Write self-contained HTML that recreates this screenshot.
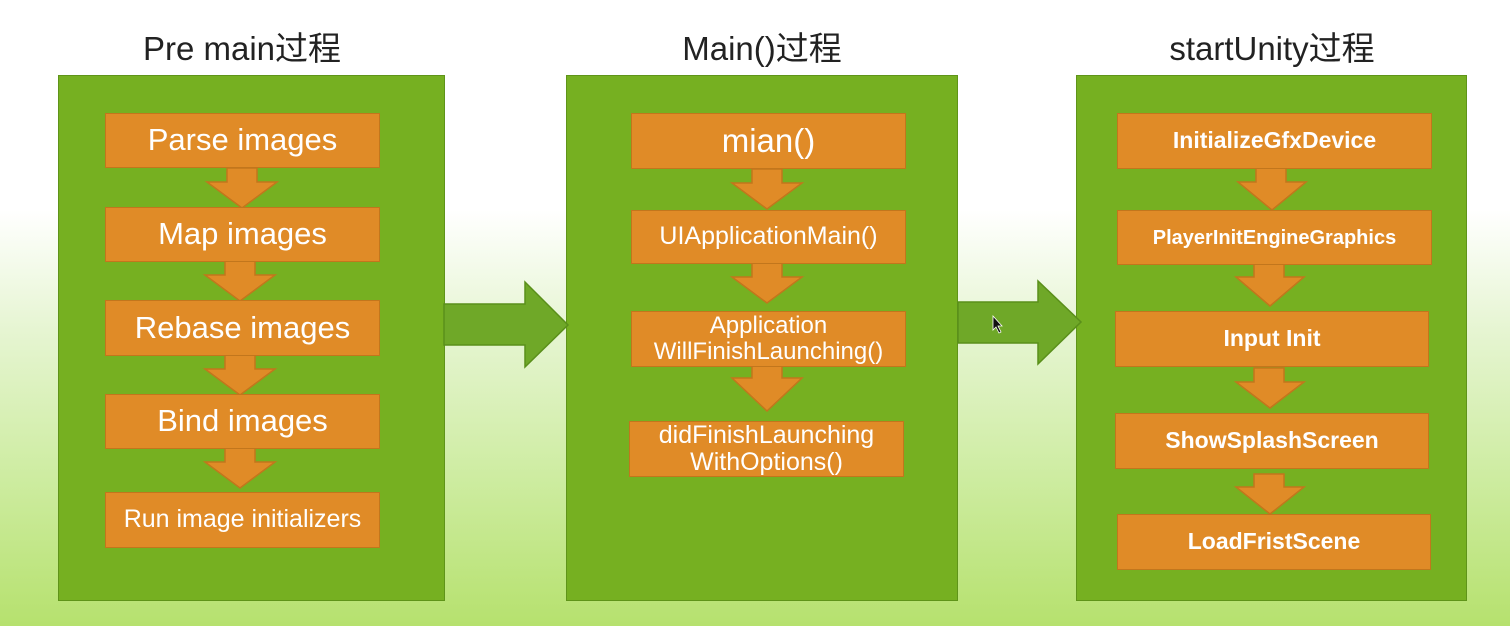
<!DOCTYPE html>
<html><head><meta charset="utf-8"><style>
body{margin:0;width:1510px;height:626px;overflow:hidden;position:relative;font-family:"Liberation Sans","Noto Sans CJK SC",sans-serif;
background:linear-gradient(180deg,#fff 0px,#fff 210px,#e6f5d2 330px,#cdeca0 480px,#b6e16e 626px);}
.t{position:absolute;top:22px;font-size:33px;color:#222;text-align:center;width:400px}
.p{position:absolute;top:75px;height:526px;background:#76b021;border:1px solid #5f9419;box-sizing:border-box}
.b{position:absolute;background:#e08b27;border:1.5px solid #c2761c;box-sizing:border-box;color:#fff;display:flex;align-items:center;justify-content:center;text-align:center;line-height:1.1}
.k{font-weight:bold;font-size:23px}
svg{position:absolute;left:0;top:0}
</style></head><body>
<div class="t" style="left:42px">Pre main过程</div>
<div class="t" style="left:562px">Main()过程</div>
<div class="t" style="left:1072px">startUnity过程</div>
<div class="p" style="left:58px;width:387px"></div>
<div class="p" style="left:566px;width:392px"></div>
<div class="p" style="left:1076px;width:391px"></div>
<svg width="1510" height="626">
<g fill="#e08b27" stroke="#c2761c" stroke-width="1.5">
<path d="M227 168h30v14h20l-35 26l-35-26h20z"/>
<path d="M225 261h30v14h20l-35 26l-35-26h20z"/>
<path d="M225 355h30v14h20l-35 26l-35-26h20z"/>
<path d="M225 448h30v14h20l-35 26l-35-26h20z"/>
<path d="M752 169h30v14h20l-35 26l-35-26h20z"/>
<path d="M752 263h30v14h20l-35 26l-35-26h20z"/>
<path d="M752 366h30v12h20l-35 33l-35-33h20z"/>
<path d="M1256 168h30v14h20l-34 28l-34-28h18z"/>
<path d="M1254 264h30v13h20l-34 29l-34-29h18z"/>
<path d="M1254 368h30v14h20l-34 26l-34-26h18z"/>
<path d="M1254 474h30v13h20l-34 27l-34-27h18z"/>
</g>
<g fill="#6fa828" stroke="#5a8f1a" stroke-width="1.5">
<path d="M444 304h81v-22l43 43l-43 42v-22h-81z"/>
<path d="M958 302h80v-21l43 41l-43 42v-21h-80z"/>
</g>
<path d="M993 316v14l3-3 3 6 2-1-3-6h4z" fill="#111" stroke="#fff" stroke-width=".8"/>
</svg>
<div class="b" style="left:105px;top:113px;width:275px;height:55px;font-size:31px">Parse images</div>
<div class="b" style="left:105px;top:207px;width:275px;height:55px;font-size:31px">Map images</div>
<div class="b" style="left:105px;top:300px;width:275px;height:56px;font-size:31px">Rebase images</div>
<div class="b" style="left:105px;top:394px;width:275px;height:55px;font-size:31px">Bind images</div>
<div class="b" style="left:105px;top:492px;width:275px;height:56px;font-size:25px">Run image initializers</div>
<div class="b" style="left:631px;top:113px;width:275px;height:56px;font-size:33px">mian()</div>
<div class="b" style="left:631px;top:210px;width:275px;height:54px;font-size:25px">UIApplicationMain()</div>
<div class="b" style="left:631px;top:311px;width:275px;height:56px;font-size:24px">Application<br>WillFinishLaunching()</div>
<div class="b" style="left:629px;top:421px;width:275px;height:56px;font-size:25px">didFinishLaunching<br>WithOptions()</div>
<div class="b k" style="left:1117px;top:113px;width:315px;height:56px">InitializeGfxDevice</div>
<div class="b k" style="left:1117px;top:210px;width:315px;height:55px;font-size:20px">PlayerInitEngineGraphics</div>
<div class="b k" style="left:1115px;top:311px;width:314px;height:56px">Input Init</div>
<div class="b k" style="left:1115px;top:413px;width:314px;height:56px">ShowSplashScreen</div>
<div class="b k" style="left:1117px;top:514px;width:314px;height:56px">LoadFristScene</div>
</body></html>
